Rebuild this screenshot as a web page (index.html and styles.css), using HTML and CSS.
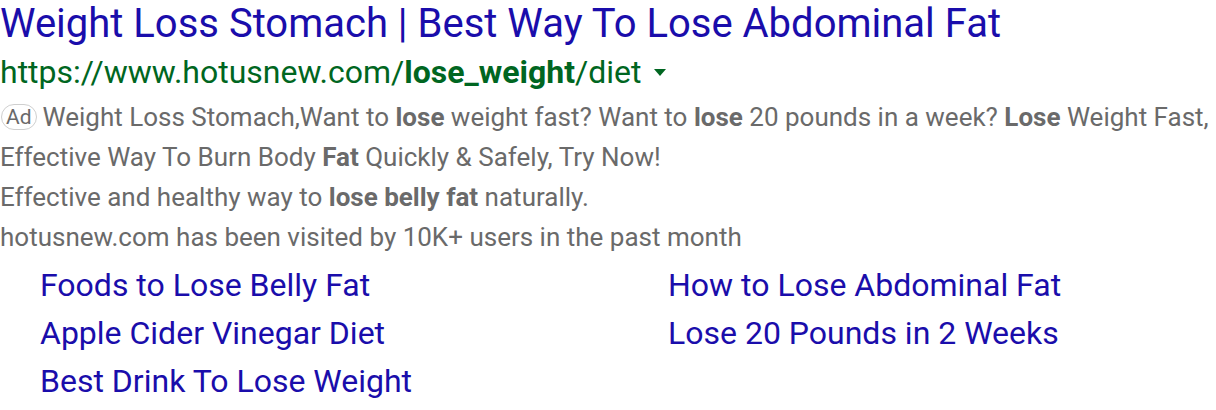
FILE: index.html
```html
<!DOCTYPE html>
<html>
<head>
<meta charset="utf-8">
<link rel="stylesheet" href="styles.css">
</head>
<body>
<div class="ad">
  <a class="title" href="#">Weight Loss Stomach | Best Way To Lose Abdominal Fat</a>
  <div class="url">https://www.hotusnew.com/<b>lose_weight</b>/diet<span class="caret"></span></div>
  <div class="desc"><span class="badge">Ad</span>Weight Loss Stomach,Want to <b>lose</b> weight fast? Want to <b>lose</b> 20 pounds in a week? <b>Lose</b> Weight Fast, Effective Way To Burn Body <b>Fat</b> Quickly &amp; Safely, Try Now!</div>
  <div class="desc">Effective and healthy way to <b>lose belly fat</b> naturally.</div>
  <div class="desc">hotusnew.com has been visited by 10K+ users in the past month</div>
  <div class="sitelinks">
    <a href="#">Foods to Lose Belly Fat</a>
    <a href="#">How to Lose Abdominal Fat</a>
    <a href="#">Apple Cider Vinegar Diet</a>
    <a href="#">Lose 20 Pounds in 2 Weeks</a>
    <a href="#">Best Drink To Lose Weight</a>
  </div>
</div>
</body>
</html>
```
FILE: styles.css
```css
html, body { margin: 0; padding: 0; background: #fff; }
body { font-family: Roboto, "Liberation Sans", Arial, sans-serif; }
.title {
  display: block;
  color: #1a0dab;
  text-decoration: none;
  font-size: 40px;
  line-height: 48px;
  white-space: nowrap;
}
.url {
  color: #006621;
  font-size: 32px;
  line-height: 49px;
  white-space: nowrap;
}
.url b { font-weight: 700; }
.caret {
  display: inline-block;
  width: 0; height: 0;
  border-left: 6px solid transparent;
  border-right: 6px solid transparent;
  border-top: 7px solid #006621;
  margin-left: 12px;
  vertical-align: 7px;
}
.desc {
  color: #6a6a6a;
  font-size: 26px;
  line-height: 40px;
}
.desc b { font-weight: 700; }
.badge {
  display: inline-block;
  border: 1px solid #cfcfcf;
  border-radius: 13px;
  font-size: 21px;
  line-height: 24px;
  padding: 0 4px;
  margin: 0 6px 0 1px;
  vertical-align: 2px;
}
.sitelinks {
  display: grid;
  grid-template-columns: 628px 1fr;
  padding-left: 40px;
  margin-top: 4px;
}
.sitelinks a {
  color: #1a0dab;
  text-decoration: none;
  font-size: 32px;
  line-height: 48px;
  white-space: nowrap;
}
```
